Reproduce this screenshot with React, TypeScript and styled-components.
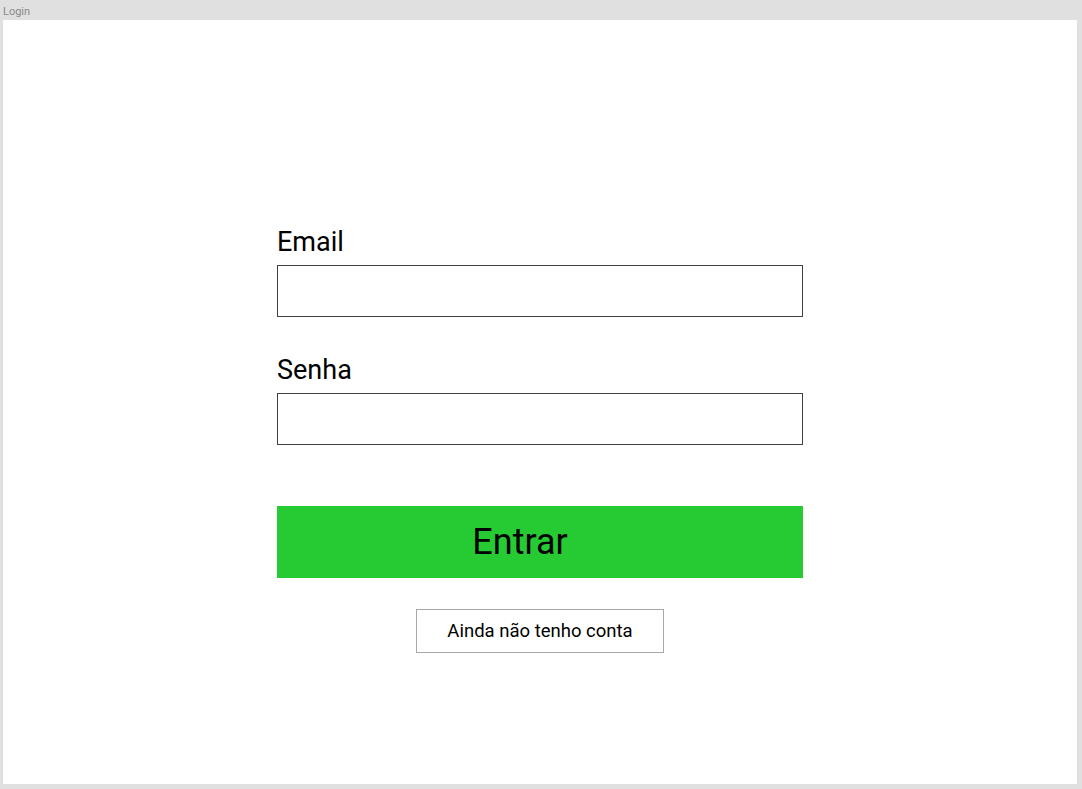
import React from 'react'
import styled, { createGlobalStyle } from 'styled-components'

const GlobalStyle = createGlobalStyle`
  html, body {
    margin: 0;
    padding: 0;
    background: #e0e0e0;
    font-family: Roboto, "Liberation Sans", Arial, sans-serif;
  }
`

const Frame = styled.div`
  width: 1082px;
  height: 789px;
  display: flex;
  flex-direction: column;
  box-sizing: border-box;
  padding: 0 5px 5px 3px;
`

const FrameTitle = styled.div`
  height: 20px;
  font-size: 11px;
  line-height: 24px;
  color: #8a8a8a;
`

const Canvas = styled.div`
  flex: 1;
  background: #fff;
  display: flex;
  justify-content: center;
  padding-top: 206px;
`

const Form = styled.form`
  width: 526px;
  display: flex;
  flex-direction: column;
`

const Label = styled.label`
  font-size: 27px;
  line-height: 32px;
  color: #000;
  margin-bottom: 7px;
`

const Input = styled.input<{ $gap: number }>`
  height: 52px;
  box-sizing: border-box;
  border: 1px solid #404040;
  outline: none;
  margin: 0 0 ${(p) => p.$gap}px;
  font-size: 18px;
  padding: 0 10px;
`

const SubmitButton = styled.button`
  height: 72px;
  border: none;
  background: #26ca32;
  color: #000;
  font-family: inherit;
  font-size: 36px;
  padding: 0 40px 0 0;
  cursor: pointer;
`

const SecondaryButton = styled.button`
  align-self: center;
  margin-top: 31px;
  width: 248px;
  height: 44px;
  background: #fff;
  border: 1px solid #a8a8a8;
  font-family: inherit;
  font-size: 18.5px;
  color: #000;
  cursor: pointer;
`

export default function App() {
  return (
    <>
      <GlobalStyle />
      <Frame>
        <FrameTitle>Login</FrameTitle>
        <Canvas>
          <Form onSubmit={(e) => e.preventDefault()}>
            <Label htmlFor="email">Email</Label>
            <Input id="email" type="email" $gap={37} />
            <Label htmlFor="senha">Senha</Label>
            <Input id="senha" type="password" $gap={61} />
            <SubmitButton type="submit">Entrar</SubmitButton>
            <SecondaryButton type="button">Ainda não tenho conta</SecondaryButton>
          </Form>
        </Canvas>
      </Frame>
    </>
  )
}
